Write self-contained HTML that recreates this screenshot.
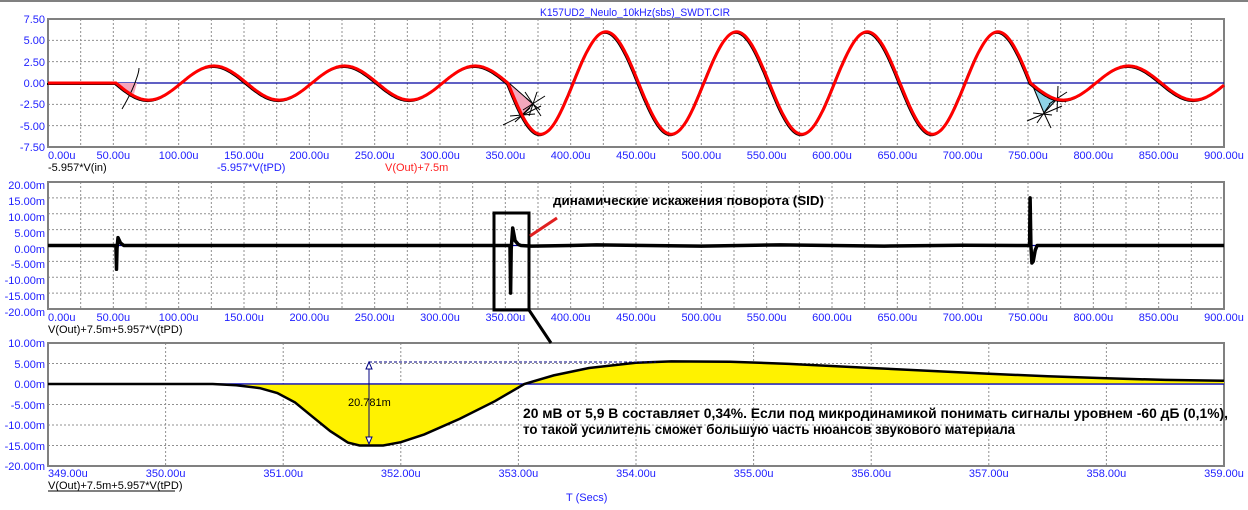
<!DOCTYPE html>
<html><head><meta charset="utf-8"><style>
html,body{margin:0;padding:0;background:#fff;width:1248px;height:510px;overflow:hidden}
svg{display:block}
text{font-family:"Liberation Sans",sans-serif;font-size:11px}
.ax{fill:#2020ff}
.b{font-weight:bold;font-size:14px;fill:#000}
</style></head><body>
<svg id="s" width="1248" height="510" xmlns="http://www.w3.org/2000/svg">
<line x1="0" y1="1" x2="1248" y2="1" stroke="#808080" stroke-width="2"/>
<text x="635" y="16" text-anchor="middle" fill="#2020ff" textLength="190" lengthAdjust="spacingAndGlyphs">K157UD2_Neulo_10kHz(sbs)_SWDT.CIR</text>
<g id="grid"></g>
<g class="ax" text-anchor="end">
<text x="45" y="23" class="ax">7.50</text><text x="45" y="44" class="ax">5.00</text><text x="45" y="66" class="ax">2.50</text><text x="45" y="87" class="ax">0.00</text><text x="45" y="108" class="ax">-2.50</text><text x="45" y="130" class="ax">-5.00</text><text x="45" y="151" class="ax">-7.50</text>
<text x="45" y="189" class="ax">20.00m</text><text x="45" y="205" class="ax">15.00m</text><text x="45" y="221" class="ax">10.00m</text><text x="45" y="237" class="ax">5.00m</text><text x="45" y="253" class="ax">0.00m</text><text x="45" y="268" class="ax">-5.00m</text><text x="45" y="284" class="ax">-10.00m</text><text x="45" y="300" class="ax">-15.00m</text><text x="45" y="316" class="ax">-20.00m</text>
<text x="45" y="347" class="ax">10.00m</text><text x="45" y="368" class="ax">5.00m</text><text x="45" y="388" class="ax">0.00m</text><text x="45" y="409" class="ax">-5.00m</text><text x="45" y="429" class="ax">-10.00m</text><text x="45" y="450" class="ax">-15.00m</text><text x="45" y="470" class="ax">-20.00m</text>
</g>
<g id="xl"></g>
<text x="48" y="171">-5.957*V(in)</text>
<text x="217" y="171" fill="#2020ff">-5.957*V(tPD)</text>
<text x="385" y="171" fill="#ff2020">V(Out)+7.5m</text>
<text x="48" y="333">V(Out)+7.5m+5.957*V(tPD)</text>
<text x="48" y="489">V(Out)+7.5m+5.957*V(tPD)</text>
<line x1="48" y1="491" x2="175" y2="491" stroke="#000" stroke-width="1"/>
<text x="566" y="501" fill="#2020ff">T (Secs)</text>
<polygon points="116,83 137,83 134,94 126,92" fill="#f4a7bd"/>
<path d="M122,109 Q132,92 136,80 Q139,72 139,68" stroke="#000" fill="none" stroke-width="1"/>
<polygon points="509,83 533,104 522,115" fill="#f4a7bd"/>
<polygon points="1032,84 1057,99 1044,113" fill="#8fd3e6"/>
<g stroke="#000" stroke-width="1">
<line x1="509" y1="83" x2="533" y2="104"/><line x1="533" y1="104" x2="522" y2="115"/>
<line x1="525" y1="92" x2="541" y2="116"/><line x1="537" y1="92" x2="529" y2="116"/><line x1="523" y1="110" x2="545" y2="96"/><line x1="526" y1="98" x2="540" y2="110"/>
<line x1="503" y1="125" x2="541" y2="106"/><line x1="510" y1="116" x2="535" y2="114"/><line x1="515" y1="122" x2="530" y2="108"/>
<line x1="1032" y1="84" x2="1044" y2="113"/><line x1="1044" y1="113" x2="1057" y2="99"/>
<line x1="1049" y1="104" x2="1067" y2="92"/><line x1="1058" y1="86" x2="1057" y2="112"/><line x1="1048" y1="96" x2="1066" y2="102"/>
<line x1="1027" y1="121" x2="1062" y2="106"/><line x1="1044" y1="113" x2="1051" y2="128"/><line x1="1033" y1="113" x2="1052" y2="115"/><line x1="1037" y1="123" x2="1050" y2="104"/>
</g>
<g id="traces"></g>
<rect x="494" y="213" width="35" height="97" fill="none" stroke="#000" stroke-width="3"/>
<line x1="530" y1="236" x2="557" y2="218" stroke="#e02020" stroke-width="3"/>
<line x1="529" y1="310" x2="551" y2="343" stroke="#000" stroke-width="3"/>
<text x="553" y="205" class="b" textLength="271" lengthAdjust="spacingAndGlyphs" style="font-size:13px">динамические искажения поворота (SID)</text>
<line x1="369" y1="362" x2="656" y2="362" stroke="#000080" stroke-dasharray="3 2"/>
<line x1="369" y1="362" x2="369" y2="444" stroke="#000080"/>
<polygon points="369,362 366,369 372,369" fill="#fff" stroke="#000080"/>
<polygon points="369,444 366,437 372,437" fill="#fff" stroke="#000080"/>
<text x="348" y="406">20.781m</text>
<text x="523" y="418" class="b" textLength="705" lengthAdjust="spacingAndGlyphs">20 мВ от 5,9 В составляет 0,34%. Если под микродинамикой понимать сигналы уровнем -60 дБ (0,1%),</text>
<text x="523" y="434" class="b" textLength="492" lengthAdjust="spacingAndGlyphs">то такой усилитель сможет большую часть нюансов звукового материала</text>
</svg>
<script>
var NS="http://www.w3.org/2000/svg";
function el(p,t,a,txt){var e=document.createElementNS(NS,t);for(var k in a)e.setAttribute(k,a[k]);if(txt)e.textContent=txt;document.getElementById(p).appendChild(e);return e;}
var X0=48,X1=1224,W=X1-X0;
var P=[[19,147,6],[182,309,8],[343,466,6]];
P.forEach(function(p,i){
 var nv=i<2?36:10;
 for(var k=1;k<nv;k++){var x=X0+W*k/nv;el("grid","line",{x1:x,y1:p[0],x2:x,y2:p[1],stroke:"#909090","stroke-dasharray":"2 2"});}
 for(var k=1;k<p[2];k++){var y=p[0]+(p[1]-p[0])*k/p[2];el("grid","line",{x1:X0,y1:y,x2:X1,y2:y,stroke:"#909090","stroke-dasharray":"2 2"});}
 el("grid","rect",{x:X0,y:p[0],width:W,height:p[1]-p[0],fill:"none",stroke:"#808080","stroke-width":2});
 var z=(p[0]+p[1])/2; if(i==2) z=384;
 el("grid","line",{x1:X0,y1:z,x2:X1,y2:z,stroke:"#0000a0","stroke-width":1.2});
});
[159,321].forEach(function(y){for(var k=0;k<=18;k++){var x=X0+W*k/18;el("xl","text",{x:k==0?X0:x,y:y,"text-anchor":k==0?"start":"middle",fill:"#2020ff"},(k*50).toFixed(2)+"u");}});
for(var k=0;k<=10;k++){var x=X0+W*k/10;el("xl","text",{x:k==0?X0:x,y:477,"text-anchor":k==0?"start":"middle",fill:"#2020ff"},(349+k).toFixed(2)+"u");}
function f1(t){if(t<52)return 0;var a=(t<352)?2:(t<752?6:2);return -a*Math.sin(2*Math.PI*(t-52)/100);}
var d="",d2="";
for(var t=0;t<=900;t+=1){var x=X0+W*t/900,y=83-f1(t)*8.53;d+=(t?"L":"M")+x.toFixed(1)+","+y.toFixed(1);d2+=(t?"L":"M")+(x-1).toFixed(1)+","+(y+1).toFixed(1);}
el("traces","path",{d:d2,stroke:"#000","stroke-width":2,fill:"none"});
el("traces","path",{d:d,stroke:"#ff0000","stroke-width":3,fill:"none"});
var pts=[[0,0],[52,0],[52.4,-7.5],[52.8,-1],[53.6,2.5],[55.5,0.8],[58,0],[353,0],[353.6,-0.5],[354,-15],[354.5,-1],[355.6,5.5],[357.5,1.5],[360,0.3],[362,0],[370,-0.2],[400,0],[420,0.2],[500,-0.2],[560,0.2],[640,-0.2],[700,0.1],[750,0],[751.2,0],[751.6,15],[752.2,0],[753,-5.5],[754,-5],[755.5,-1.5],[757,0],[900,0]];
d="";pts.forEach(function(p,i){var x=X0+W*p[0]/900,y=245.5-p[1]*3.175;d+=(i?"L":"M")+x.toFixed(1)+","+y.toFixed(1);});
el("traces","path",{d:d,stroke:"#000","stroke-width":3.5,fill:"none","stroke-linejoin":"round"});
var q=[[349,0],[350.4,0],[350.6,-0.3],[350.8,-1],[350.95,-2.2],[351.1,-4.5],[351.25,-8],[351.4,-11.5],[351.55,-14.3],[351.65,-15],[351.85,-15],[352,-14.2],[352.2,-12.3],[352.5,-8.5],[352.8,-4.2],[353.05,0],[353.3,2.1],[353.6,3.9],[354,5.2],[354.3,5.5],[354.8,5.45],[355.3,4.9],[356,3.9],[356.5,3.2],[357,2.5],[357.5,1.9],[358,1.4],[358.5,1.0],[359,0.8]];
d="";q.forEach(function(p,i){var x=X0+W*(p[0]-349)/10,y=384-p[1]*4.1;d+=(i?"L":"M")+x.toFixed(1)+","+y.toFixed(1);});
el("traces","path",{d:d+"L"+X1+",384L"+X0+",384Z",fill:"#fff200",stroke:"none"});
el("traces","line",{x1:X0,y1:384,x2:X1,y2:384,stroke:"#0000c0","stroke-width":1.3});
el("traces","path",{d:d,stroke:"#000","stroke-width":2.5,fill:"none"});
</script>
</body></html>
